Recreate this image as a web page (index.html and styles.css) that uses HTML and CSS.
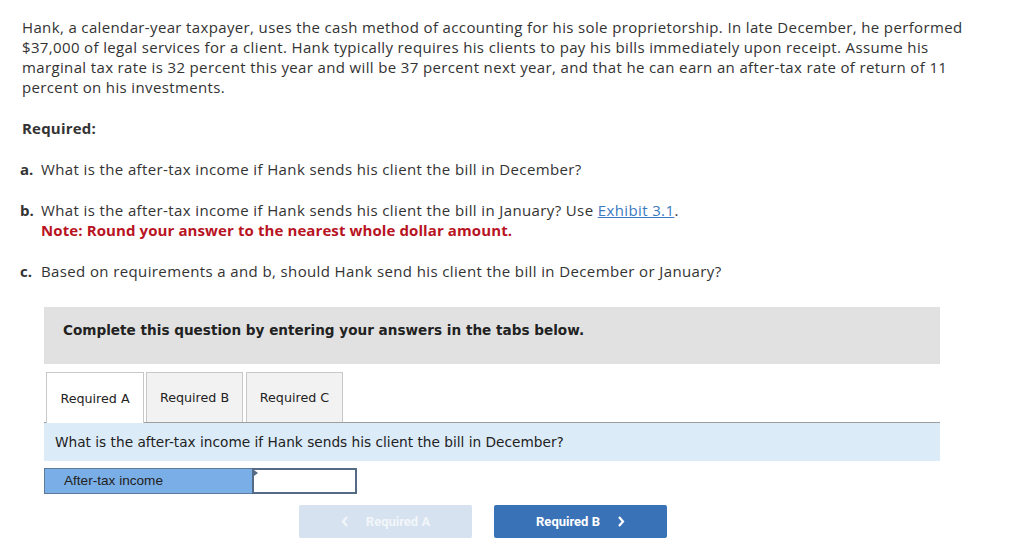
FILE: index.html
```html
<!DOCTYPE html>
<html>
<head>
<meta charset="utf-8">
<link rel="stylesheet" href="styles.css">
</head>
<body>
<div class="page">
  <p class="intro">Hank, a calendar-year taxpayer, uses the cash method of accounting for his sole proprietorship. In late December, he performed $37,000 of legal services for a client. Hank typically requires his clients to pay his bills immediately upon receipt. Assume his marginal tax rate is 32 percent this year and will be 37 percent next year, and that he can earn an after-tax rate of return of 11 percent on his investments.</p>
  <p class="required">Required:</p>
  <div class="item"><span class="letter">a.</span><div class="itext">What is the after-tax income if Hank sends his client the bill in December?</div></div>
  <div class="item"><span class="letter">b.</span><div class="itext">What is the after-tax income if Hank sends his client the bill in January? Use <a class="link" href="#">Exhibit 3.1</a>.<br><span class="note">Note: Round your answer to the nearest whole dollar amount.</span></div></div>
  <div class="item"><span class="letter">c.</span><div class="itext">Based on requirements a and b, should Hank send his client the bill in December or January?</div></div>

  <div class="panel">
    <div class="banner">Complete this question by entering your answers in the tabs below.</div>
    <div class="tabs">
      <div class="tab active">Required A</div>
      <div class="tab">Required B</div>
      <div class="tab tab-c">Required C</div>
    </div>
    <div class="question">What is the after-tax income if Hank sends his client the bill in December?</div>
    <div class="answer">
      <div class="label">After-tax income</div>
      <div class="input"><span class="marker"></span></div>
    </div>
    <div class="nav">
      <div class="btn prev"><svg class="chev" width="8" height="11" viewBox="0 0 8 11"><path d="M6 1 L2 5.5 L6 10" fill="none" stroke="currentColor" stroke-width="2.2"/></svg>Required A</div>
      <div class="btn next">Required B<svg class="chev" width="8" height="11" viewBox="0 0 8 11"><path d="M2 1 L6 5.5 L2 10" fill="none" stroke="currentColor" stroke-width="2.2"/></svg></div>
    </div>
  </div>
</div>
</body>
</html>
```

FILE: styles.css
```css
html, body { margin: 0; padding: 0; background: #fff; }
.page { padding: 17px 0 0 20px; width: 960px; font-family: "Open Sans", "Liberation Sans", sans-serif; color: #333; }
.intro { margin: 0 0 0 2px; font-size: 15px; line-height: 20px; width: 955px; letter-spacing: 0.36px; }
.required { margin: 21px 0 0 2px; font-size: 15px; font-weight: bold; line-height: 20px; letter-spacing: 0.2px; }
.item { display: flex; margin-top: 21px; font-size: 15px; line-height: 20px; letter-spacing: 0.38px; }
.letter { width: 21px; font-weight: bold; letter-spacing: 0; }
.link { color: #3b7ac0; }
.note { color: #b8131f; font-weight: bold; letter-spacing: 0.1px; }
.panel { margin: 26px 0 0 24px; width: 896px; }
.banner { background: #e1e1e1; height: 57px; box-sizing: border-box; padding: 15px 0 0 19px; font-family: "DejaVu Sans", Verdana, sans-serif; font-weight: bold; font-size: 13.6px; color: #222; }
.tabs { display: flex; gap: 2px; margin-top: 8px; padding-left: 2px; height: 50px; }
.tab { width: 97px; height: 50px; box-sizing: border-box; border: 1px solid #c8c8c8; border-bottom: none; background: #f2f2f2; font-family: "DejaVu Sans", Verdana, sans-serif; font-size: 12.7px; color: #222; display: flex; align-items: center; justify-content: center; }
.tab.active { background: #fff; height: 51px; position: relative; z-index: 1; width: 98px; }
.tab.tab-c { margin-left: 1px; }
.question { background: #dcebf8; border-top: 1px solid #9e9e9e; height: 39px; box-sizing: border-box; padding: 11px 0 0 11px; font-family: "DejaVu Sans", Verdana, sans-serif; font-size: 13.7px; color: #222; }
.answer { display: flex; margin-top: 7px; height: 26px; }
.label { width: 208px; box-sizing: border-box; background: #7aaee6; border: 1px solid #5e7a98; border-right: none; padding: 4px 0 0 19px; font-family: "Liberation Sans", Arial, sans-serif; font-size: 13.6px; color: #222; }
.input { width: 105px; box-sizing: border-box; border: 2px solid #556a85; background: #fff; position: relative; }
.marker { position: absolute; left: 0; top: 0; width: 0; height: 0; border-top: 3px solid transparent; border-bottom: 3px solid transparent; border-left: 4px solid #556a85; }
.nav { display: flex; gap: 22px; margin: 11px 0 0 255px; }
.btn { width: 173px; height: 33px; border-radius: 2px; display: flex; align-items: center; justify-content: center; font-family: Roboto, "Liberation Sans", sans-serif; font-weight: bold; font-size: 13px; }
.btn.prev { background: #d6e2ef; color: #f2f6fa; }
.btn.next { background: #3a72b8; color: #fff; }
.prev .chev { margin-right: 17px; }
.next .chev { margin-left: 17px; }
```
